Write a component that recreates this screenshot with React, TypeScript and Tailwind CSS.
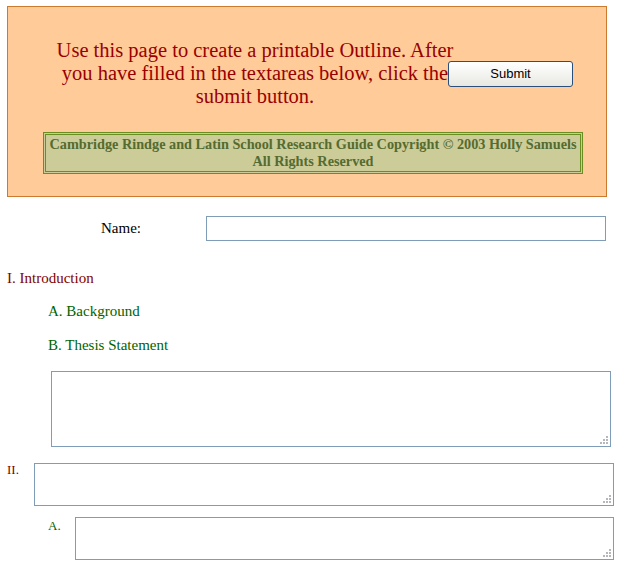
import React from 'react'

// Dotted resize grip drawn at the textarea's bottom-right corner
function Grip() {
  const dots = [
    [6, 0], [3, 3], [6, 3], [0, 6], [3, 6], [6, 6],
  ]
  return (
    <svg width="8" height="8" className="pointer-events-none absolute bottom-[3px] right-[3px]">
      {dots.map(([x, y], i) => (
        <rect key={i} x={x} y={y} width="2" height="2" fill="#b4b8bc" />
      ))}
    </svg>
  )
}

function Area({ w, h }: { w: number; h: number }) {
  return (
    <div className="relative" style={{ width: w, height: h }}>
      <textarea className="block h-full w-full resize-none border border-[#7f9db9] bg-white outline-none" />
      <Grip />
    </div>
  )
}

export default function App() {
  return (
    <div className="min-h-[570px] w-[620px] bg-white pl-[7px] pt-[6px] font-['Liberation_Serif',serif]">
      {/* Header panel */}
      <div className="h-[191px] w-[600px] border border-[#cc7a2e] bg-[#ffcc99] pt-[32px]">
        <div className="flex items-center pl-[46px]">
          <p className="w-[402px] text-center text-[20.5px] leading-[23px] text-[#990000]">
            Use this page to create a printable Outline. After you have filled in the textareas below, click the submit button.
          </p>
          <button className="ml-[-8px] h-[26px] w-[125px] rounded-[3px] border border-[#2a4f7c] bg-gradient-to-b from-white to-[#e8e8e2] font-['Liberation_Sans',sans-serif] text-[13px] text-black">
            Submit
          </button>
        </div>
        <div className="ml-[35px] mt-[24px] h-[42px] w-[540px] border-[3px] border-double border-[#6b8e23] bg-[#cccc99] pt-[1px] text-center text-[14.25px] font-bold leading-[17px] text-[#556b2f]">
          Cambridge Rindge and Latin School Research Guide Copyright © 2003 Holly Samuels
          <br />
          All Rights Reserved
        </div>
      </div>

      {/* Name */}
      <div className="mt-[19px] flex items-center">
        <span className="w-[199px] pl-[94px] text-[15px] text-black">Name:</span>
        <input className="h-[25px] w-[400px] border border-[#7f9db9] bg-white outline-none" />
      </div>

      {/* Section I */}
      <p className="mt-[27px] text-[15px] leading-[20px] text-[#800000]">I. Introduction</p>
      <p className="ml-[41px] mt-[13px] text-[15px] leading-[20px] text-[#006400]">A. Background</p>
      <p className="ml-[41px] mt-[14px] text-[15px] leading-[20px] text-[#006400]">B. Thesis Statement</p>
      <div className="ml-[44px] mt-[16px]">
        <Area w={560} h={76} />
      </div>

      {/* Section II */}
      <div className="mt-[16px] flex items-start">
        <span className="w-[27px] text-[13px] leading-[13px] text-[#800000]">II.</span>
        <Area w={580} h={43} />
      </div>
      <div className="mt-[11px] flex items-start pl-[41px]">
        <span className="mt-[2px] w-[27px] text-[13px] leading-[13px] text-[#006400]">A.</span>
        <Area w={539} h={43} />
      </div>
    </div>
  )
}
